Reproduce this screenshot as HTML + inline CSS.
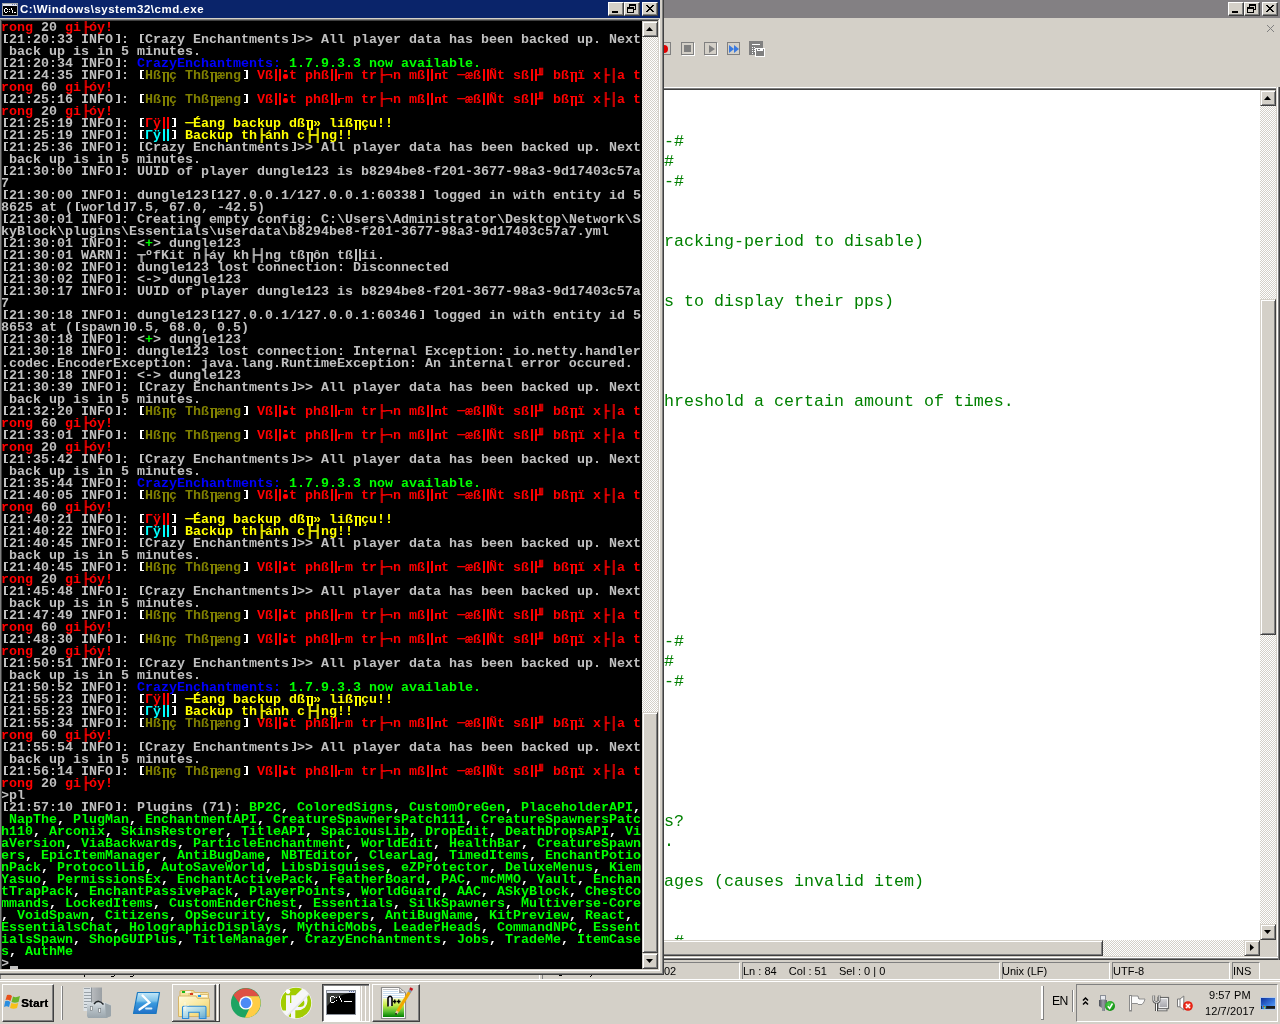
<!DOCTYPE html><html><head><meta charset="utf-8"><style>
*{margin:0;padding:0;box-sizing:border-box}
html,body{width:1280px;height:1024px;overflow:hidden;background:#d4d0c8;position:relative}
body>div,.a{position:absolute}
.con{position:absolute;left:2px;top:21px;width:640px;height:948px;background:#000;overflow:hidden;will-change:transform}
.con pre{position:absolute;left:-1px;font-family:"Liberation Mono",monospace;font-weight:bold;font-size:13.3333px;line-height:12px;height:12px;white-space:pre;color:#c0c0c0}
.con b{font-weight:bold;text-shadow:1px 0 0}
.bk{display:inline-block;width:8px;height:12px;vertical-align:top;position:relative}
.bk::before{content:'';position:absolute;top:0;width:4px;height:9px;box-sizing:border-box;border-top:1px solid;border-bottom:1px solid}
.bk::after{content:'';position:absolute;top:0;width:2px;height:9px;background:currentColor}
.bl::before{left:3px}.bl::after{left:3px}
.br::before{left:3px}.br::after{left:5px}
.dv{display:inline-block;width:8px;height:12px;vertical-align:top;position:relative}
.g1::before{left:2px!important;top:3px!important;height:9px!important}
.g1::after{content:'';position:absolute;left:1px;top:2px;width:7px;height:1px;background:currentColor}
.g2::before{left:2px!important;top:3px!important;height:6px!important}
.g2::after{content:'';position:absolute;left:2px;top:3px;width:6px;height:1px;background:currentColor}
.g3::before{left:3px!important;top:0!important;height:2px!important;width:3px!important;box-shadow:none!important}
.g3::after{content:'';position:absolute;left:2px;top:4px;width:5px;height:5px;border-radius:2px;background:currentColor}
.g4::before{left:1px!important;top:4px!important;height:5px!important;box-shadow:none!important}
.g4::after{content:'';position:absolute;left:1px;top:4px;width:6px;height:1px;background:currentColor}
.dv::before{content:'';position:absolute;left:2px;top:-1px;width:2px;height:12px;background:currentColor;box-shadow:4px 0 0 currentColor}
.ed{position:absolute;font-family:"Liberation Mono",monospace;font-size:16.6667px;line-height:20px;color:#008000;white-space:pre;will-change:transform}
.ui{font-family:"Liberation Sans",sans-serif;font-size:11px;color:#000;white-space:pre;will-change:transform}
</style></head><body>

<div style="left:664px;top:0px;width:616px;height:18px;background:#838083;"></div>
<div style="left:1228px;top:2px;width:16px;height:14px;background:#d4d0c8;border-top:1px solid #fff;border-left:1px solid #fff;border-right:1px solid #404040;border-bottom:1px solid #404040;box-shadow:inset -1px -1px 0 #808080"></div>
<div style="left:1244px;top:2px;width:16px;height:14px;background:#d4d0c8;border-top:1px solid #fff;border-left:1px solid #fff;border-right:1px solid #404040;border-bottom:1px solid #404040;box-shadow:inset -1px -1px 0 #808080"></div>
<div style="left:1262px;top:2px;width:16px;height:14px;background:#d4d0c8;border-top:1px solid #fff;border-left:1px solid #fff;border-right:1px solid #404040;border-bottom:1px solid #404040;box-shadow:inset -1px -1px 0 #808080"></div>
<div class="a" style="left:1232px;top:11px;width:6px;height:2px;background:#000"></div>
<div class="a" style="left:1249px;top:4px;width:7px;height:6px;border:1px solid #000;border-top-width:2px"></div>
<div class="a" style="left:1247px;top:7px;width:7px;height:6px;border:1px solid #000;border-top-width:2px;background:#d4d0c8"></div>
<svg class="a" style="left:1262px;top:2px" width="16" height="14"><path d="M4 3 L11 10 M5 3 L12 10 M11 3 L4 10 M12 3 L5 10" stroke="#000" stroke-width="1" shape-rendering="crispEdges"/></svg>
<div style="left:664px;top:18px;width:616px;height:69px;background:#d4d0c8;"></div>
<svg class="a" style="left:1266px;top:24px" width="10" height="10"><path d="M1 1 L8 8 M8 1 L1 8" stroke="#808080" stroke-width="1"/></svg>
<div class="a" style="left:664px;top:42px;width:7px;height:13px;border:1px solid #808080;border-left:none;background:#d4d0c8"></div>
<div class="a" style="left:664px;top:45px;width:4px;height:8px;border-radius:0 4px 4px 0;background:#e00000"></div>
<div class="a" style="left:681px;top:42px;width:13px;height:13px;border:1px solid #808080;box-shadow:1px 1px 0 #fff"></div>
<div class="a" style="left:684px;top:45px;width:7px;height:7px;background:#808080"></div>
<div class="a" style="left:704px;top:42px;width:13px;height:13px;border:1px solid #808080;box-shadow:1px 1px 0 #fff"></div>
<svg class="a" style="left:704px;top:42px" width="14" height="14"><path d="M5 3 L11 7 L5 11 Z" fill="#808080"/></svg>
<div class="a" style="left:727px;top:42px;width:13px;height:13px;border:1px solid #808080"></div>
<svg class="a" style="left:727px;top:42px" width="14" height="14"><path d="M2 3 L7 7 L2 11 Z M7 3 L12 7 L7 11 Z" fill="#3a7ae0"/></svg>
<svg class="a" style="left:748px;top:40px" width="20" height="18" shape-rendering="crispEdges"><rect x="1" y="1" width="14" height="14" fill="#808080"/><rect x="4" y="4" width="8" height="1" fill="#fff"/><rect x="4" y="7" width="1" height="1" fill="#fff"/><rect x="4" y="9" width="1" height="1" fill="#fff"/><rect x="4" y="11" width="1" height="1" fill="#fff"/><rect x="4" y="13" width="1" height="1" fill="#fff"/><rect x="6" y="7" width="1" height="1" fill="#fff"/><rect x="6" y="9" width="1" height="1" fill="#fff"/><rect x="6" y="11" width="1" height="1" fill="#fff"/><rect x="7" y="8" width="10" height="9" fill="#fff"/><rect x="8" y="9" width="8" height="7" fill="#808080"/><rect x="9" y="9" width="1" height="2" fill="#fff"/><rect x="9" y="10" width="6" height="1" fill="#fff"/><rect x="12" y="9" width="3" height="1" fill="#fff"/></svg>
<div style="left:664px;top:87px;width:616px;height:1px;background:#ffffff;"></div>
<div style="left:664px;top:88px;width:614px;height:1px;background:#808080;"></div>
<div style="left:664px;top:89px;width:614px;height:1px;background:#404040;"></div>
<div style="left:1276px;top:87px;width:1px;height:873px;background:#d4d0c8;"></div>
<div style="left:1277px;top:87px;width:1px;height:873px;background:#ffffff;"></div>
<div style="left:1278px;top:87px;width:1px;height:873px;background:#808080;"></div>
<div style="left:1279px;top:87px;width:1px;height:873px;background:#404040;"></div>
<div style="left:664px;top:90px;width:596px;height:850px;background:#ffffff;"></div>
<div class="ed" style="left:664px;top:132px">-#</div>
<div class="ed" style="left:664px;top:152px">#</div>
<div class="ed" style="left:664px;top:172px">-#</div>
<div class="ed" style="left:664px;top:232px">racking-period to disable)</div>
<div class="ed" style="left:664px;top:292px">s to display their pps)</div>
<div class="ed" style="left:664px;top:392px">hreshold a certain amount of times.</div>
<div class="ed" style="left:664px;top:632px">-#</div>
<div class="ed" style="left:664px;top:652px">#</div>
<div class="ed" style="left:664px;top:672px">-#</div>
<div class="ed" style="left:664px;top:812px">s?</div>
<div class="ed" style="left:664px;top:832px">.</div>
<div class="ed" style="left:664px;top:872px">ages (causes invalid item)</div>
<div class="ed" style="left:664px;top:932px"> #</div>
<div class="a" style="left:1260px;top:90px;width:16px;height:850px;background-color:#fff;background-image:linear-gradient(45deg,#d4d0c8 25%,transparent 25%,transparent 75%,#d4d0c8 75%),linear-gradient(45deg,#d4d0c8 25%,transparent 25%,transparent 75%,#d4d0c8 75%);background-size:2px 2px;background-position:0 0,1px 1px;"></div>
<div style="left:1260px;top:90px;width:16px;height:16px;background:#d4d0c8;border-top:1px solid #d4d0c8;border-left:1px solid #d4d0c8;border-right:1px solid #404040;border-bottom:1px solid #404040;box-shadow:inset 1px 1px 0 #fff, inset -1px -1px 0 #808080"></div>
<svg class="a" style="left:1260px;top:90px" width="16" height="16"><path d="M4 10 H11 L7.5 6 Z" fill="#000"/></svg>
<div style="left:1260px;top:299px;width:16px;height:336px;background:#d4d0c8;border-top:1px solid #d4d0c8;border-left:1px solid #d4d0c8;border-right:1px solid #404040;border-bottom:1px solid #404040;box-shadow:inset 1px 1px 0 #fff, inset -1px -1px 0 #808080"></div>
<div style="left:1260px;top:924px;width:16px;height:16px;background:#d4d0c8;border-top:1px solid #d4d0c8;border-left:1px solid #d4d0c8;border-right:1px solid #404040;border-bottom:1px solid #404040;box-shadow:inset 1px 1px 0 #fff, inset -1px -1px 0 #808080"></div>
<svg class="a" style="left:1260px;top:924px" width="16" height="16"><path d="M4 6 H11 L7.5 10 Z" fill="#000"/></svg>
<div class="a" style="left:664px;top:940px;width:596px;height:16px;background-color:#fff;background-image:linear-gradient(45deg,#d4d0c8 25%,transparent 25%,transparent 75%,#d4d0c8 75%),linear-gradient(45deg,#d4d0c8 25%,transparent 25%,transparent 75%,#d4d0c8 75%);background-size:2px 2px;background-position:0 0,1px 1px;"></div>
<div style="left:640px;top:940px;width:463px;height:16px;background:#d4d0c8;border-top:1px solid #d4d0c8;border-left:1px solid #d4d0c8;border-right:1px solid #404040;border-bottom:1px solid #404040;box-shadow:inset 1px 1px 0 #fff, inset -1px -1px 0 #808080"></div>
<div style="left:1244px;top:940px;width:16px;height:16px;background:#d4d0c8;border-top:1px solid #d4d0c8;border-left:1px solid #d4d0c8;border-right:1px solid #404040;border-bottom:1px solid #404040;box-shadow:inset 1px 1px 0 #fff, inset -1px -1px 0 #808080"></div>
<svg class="a" style="left:1244px;top:940px" width="16" height="16"><path d="M6 4 V11 L10 7.5 Z" fill="#000"/></svg>
<div style="left:1260px;top:940px;width:16px;height:16px;background:#d4d0c8;"></div>
<div style="left:664px;top:956px;width:614px;height:1px;background:#d4d0c8;"></div>
<div style="left:664px;top:957px;width:614px;height:1px;background:#ffffff;"></div>
<div style="left:664px;top:958px;width:614px;height:1px;background:#808080;"></div>
<div style="left:664px;top:959px;width:614px;height:1px;background:#404040;"></div>
<div style="left:664px;top:960px;width:616px;height:20px;background:#d4d0c8;"></div>
<div class="a" style="left:0px;top:962px;width:540px;height:18px;border-top:1px solid #808080;border-left:1px solid #808080;border-bottom:1px solid #fff;border-right:1px solid #fff"></div>
<div class="a" style="left:542px;top:962px;width:198px;height:18px;border-top:1px solid #808080;border-left:1px solid #808080;border-bottom:1px solid #fff;border-right:1px solid #fff"></div>
<div style="left:84px;top:975px;width:1px;height:2px;background:#000;"></div>
<div style="left:111px;top:976px;width:3px;height:1px;background:#000;"></div>
<div style="left:114px;top:975px;width:1px;height:1px;background:#000;"></div>
<div style="left:130px;top:976px;width:3px;height:1px;background:#000;"></div>
<div style="left:133px;top:975px;width:1px;height:1px;background:#000;"></div>
<div style="left:559px;top:975px;width:3px;height:1px;background:#000;"></div>
<div style="left:562px;top:974px;width:1px;height:1px;background:#000;"></div>
<div style="left:590px;top:976px;width:1px;height:1px;background:#000;"></div>
<div style="left:591px;top:975px;width:1px;height:1px;background:#000;"></div>
<div class="a" style="left:742px;top:962px;width:258px;height:18px;border-top:1px solid #808080;border-left:1px solid #808080;border-bottom:1px solid #fff;border-right:1px solid #fff"></div>
<div class="a" style="left:1002px;top:962px;width:108px;height:18px;border-top:1px solid #808080;border-left:1px solid #808080;border-bottom:1px solid #fff;border-right:1px solid #fff"></div>
<div class="a" style="left:1112px;top:962px;width:118px;height:18px;border-top:1px solid #808080;border-left:1px solid #808080;border-bottom:1px solid #fff;border-right:1px solid #fff"></div>
<div class="a" style="left:1232px;top:962px;width:28px;height:18px;border-top:1px solid #808080;border-left:1px solid #808080;border-bottom:1px solid #fff;border-right:1px solid #fff"></div>
<div class="a ui" style="left:664px;top:965px">02</div>
<div class="a ui" style="left:743px;top:965px">Ln : 84    Col : 51    Sel : 0 | 0</div>
<div class="a ui" style="left:1002px;top:965px">Unix (LF)</div>
<div class="a ui" style="left:1113px;top:965px">UTF-8</div>
<div class="a ui" style="left:1233px;top:965px">INS</div>
<div style="left:0px;top:979px;width:1280px;height:1px;background:#ffffff;"></div>
<div style="left:0px;top:0px;width:660px;height:18px;background:#0a246a;"></div>
<svg class="a" style="left:0;top:0" width="20" height="18" shape-rendering="crispEdges"><rect x="2" y="3" width="16" height="13" fill="#a3a6a8"/><rect x="3" y="4" width="14" height="2" fill="#dfe2ee"/><rect x="12" y="4" width="1" height="1" fill="#6b7aa8"/><rect x="14" y="4" width="1" height="1" fill="#6b7aa8"/><rect x="16" y="4" width="1" height="1" fill="#6b7aa8"/><rect x="3" y="6" width="14" height="9" fill="#000"/><g fill="#fff"><rect x="5" y="8" width="2" height="1"/><rect x="4" y="9" width="1" height="3"/><rect x="5" y="12" width="2" height="1"/><rect x="7" y="9" width="1" height="1"/><rect x="7" y="11" width="1" height="1"/><rect x="9" y="9" width="1" height="1"/><rect x="9" y="11" width="1" height="1"/><rect x="11" y="8" width="1" height="2"/><rect x="12" y="10" width="1" height="3"/><rect x="14" y="12" width="2" height="1"/></g></svg>
<div class="a ui" style="left:20px;top:2px;font-weight:bold;color:#fff;font-size:11.5px;letter-spacing:0.5px;line-height:14px">C:\Windows\system32\cmd.exe</div>
<div style="left:608px;top:2px;width:16px;height:14px;background:#d4d0c8;border-top:1px solid #fff;border-left:1px solid #fff;border-right:1px solid #404040;border-bottom:1px solid #404040;box-shadow:inset -1px -1px 0 #808080"></div>
<div style="left:624px;top:2px;width:16px;height:14px;background:#d4d0c8;border-top:1px solid #fff;border-left:1px solid #fff;border-right:1px solid #404040;border-bottom:1px solid #404040;box-shadow:inset -1px -1px 0 #808080"></div>
<div style="left:642px;top:2px;width:16px;height:14px;background:#d4d0c8;border-top:1px solid #fff;border-left:1px solid #fff;border-right:1px solid #404040;border-bottom:1px solid #404040;box-shadow:inset -1px -1px 0 #808080"></div>
<div class="a" style="left:612px;top:11px;width:6px;height:2px;background:#000"></div>
<div class="a" style="left:629px;top:4px;width:7px;height:6px;border:1px solid #000;border-top-width:2px"></div>
<div class="a" style="left:627px;top:7px;width:7px;height:6px;border:1px solid #000;border-top-width:2px;background:#d4d0c8"></div>
<svg class="a" style="left:642px;top:2px" width="16" height="14"><path d="M4 3 L11 10 M5 3 L12 10 M11 3 L4 10 M12 3 L5 10" stroke="#000" stroke-width="1" shape-rendering="crispEdges"/></svg>
<div style="left:0px;top:18px;width:664px;height:1px;background:#d4d0c8;"></div>
<div style="left:0px;top:19px;width:664px;height:1px;background:#808080;"></div>
<div style="left:0px;top:20px;width:658px;height:1px;background:#404040;"></div>
<div style="left:0px;top:19px;width:1px;height:950px;background:#808080;"></div>
<div style="left:1px;top:20px;width:1px;height:949px;background:#404040;"></div>
<div style="left:658px;top:20px;width:1px;height:949px;background:#d4d0c8;"></div>
<div style="left:659px;top:19px;width:1px;height:951px;background:#ffffff;"></div>
<div style="left:660px;top:0px;width:2px;height:973px;background:#d4d0c8;"></div>
<div style="left:662px;top:0px;width:1px;height:974px;background:#808080;"></div>
<div style="left:663px;top:0px;width:1px;height:975px;background:#404040;"></div>
<div style="left:0px;top:969px;width:659px;height:1px;background:#d4d0c8;"></div>
<div style="left:0px;top:970px;width:660px;height:1px;background:#ffffff;"></div>
<div style="left:0px;top:971px;width:662px;height:2px;background:#d4d0c8;"></div>
<div style="left:0px;top:973px;width:663px;height:1px;background:#808080;"></div>
<div style="left:0px;top:974px;width:664px;height:1px;background:#404040;"></div>
<div class="a" style="left:642px;top:21px;width:16px;height:948px;background-color:#fff;background-image:linear-gradient(45deg,#d4d0c8 25%,transparent 25%,transparent 75%,#d4d0c8 75%),linear-gradient(45deg,#d4d0c8 25%,transparent 25%,transparent 75%,#d4d0c8 75%);background-size:2px 2px;background-position:0 0,1px 1px;"></div>
<div style="left:642px;top:21px;width:16px;height:16px;background:#d4d0c8;border-top:1px solid #d4d0c8;border-left:1px solid #d4d0c8;border-right:1px solid #404040;border-bottom:1px solid #404040;box-shadow:inset 1px 1px 0 #fff, inset -1px -1px 0 #808080"></div>
<svg class="a" style="left:642px;top:21px" width="16" height="16"><path d="M4 10 H11 L7.5 6 Z" fill="#000"/></svg>
<div style="left:642px;top:712px;width:16px;height:241px;background:#d4d0c8;border-top:1px solid #d4d0c8;border-left:1px solid #d4d0c8;border-right:1px solid #404040;border-bottom:1px solid #404040;box-shadow:inset 1px 1px 0 #fff, inset -1px -1px 0 #808080"></div>
<div style="left:642px;top:953px;width:16px;height:16px;background:#d4d0c8;border-top:1px solid #d4d0c8;border-left:1px solid #d4d0c8;border-right:1px solid #404040;border-bottom:1px solid #404040;box-shadow:inset 1px 1px 0 #fff, inset -1px -1px 0 #808080"></div>
<svg class="a" style="left:642px;top:953px" width="16" height="16"><path d="M4 6 H11 L7.5 10 Z" fill="#000"/></svg>
<div class="con">
<pre style="top:1px"><span style="color:#ff0000">rong </span>20 <span style="color:#ff0000">gi<b>├</b>óy!</span></pre>
<pre style="top:13px"><i class="bk bl"></i>21:20:33 INFO<i class="bk br"></i>: <i class="bk bl"></i>Crazy Enchantments<i class="bk br"></i>&gt;&gt; All player data has been backed up. Next</pre>
<pre style="top:25px"> back up is in 5 minutes.</pre>
<pre style="top:37px"><i class="bk bl"></i>21:20:34 INFO<i class="bk br"></i>: <span style="color:#0000ff">CrazyEnchantments: </span><span style="color:#00ff00">1.7.9.3.3 now available.</span></pre>
<pre style="top:49px"><i class="bk bl"></i>21:24:35 INFO<i class="bk br"></i>: <span style="color:#ffffff"><i class="bk bl"></i></span><span style="color:#808000">Hß<i class="dv g1"></i>ç Thß<i class="dv g1"></i>æng</span><span style="color:#ffffff"><i class="bk br"></i></span><span style="color:#ff0000"> Vß<i class="dv"></i><i class="dv g3"></i>t phß<i class="dv"></i><i class="dv g4"></i>m tr<b>├</b>¬n mß<i class="dv"></i><i class="dv g2"></i>t <b>─</b>æß<i class="dv"></i>Ñt sß<i class="dv"></i><b>╜</b> bß<i class="dv g1"></i>ï x<b>├</b><b>│</b>a t</span></pre>
<pre style="top:61px"><span style="color:#ff0000">rong </span>60 <span style="color:#ff0000">gi<b>├</b>óy!</span></pre>
<pre style="top:73px"><i class="bk bl"></i>21:25:16 INFO<i class="bk br"></i>: <span style="color:#ffffff"><i class="bk bl"></i></span><span style="color:#808000">Hß<i class="dv g1"></i>ç Thß<i class="dv g1"></i>æng</span><span style="color:#ffffff"><i class="bk br"></i></span><span style="color:#ff0000"> Vß<i class="dv"></i><i class="dv g3"></i>t phß<i class="dv"></i><i class="dv g4"></i>m tr<b>├</b>¬n mß<i class="dv"></i><i class="dv g2"></i>t <b>─</b>æß<i class="dv"></i>Ñt sß<i class="dv"></i><b>╜</b> bß<i class="dv g1"></i>ï x<b>├</b><b>│</b>a t</span></pre>
<pre style="top:85px"><span style="color:#ff0000">rong </span>20 <span style="color:#ff0000">gi<b>├</b>óy!</span></pre>
<pre style="top:97px"><i class="bk bl"></i>21:25:19 INFO<i class="bk br"></i>: <span style="color:#ffffff"><i class="bk bl"></i></span><span style="color:#ff0000">Γÿ<i class="dv"></i></span><span style="color:#ffffff"><i class="bk br"></i></span><span style="color:#ffff00"> <b>─</b>Éang backup dß<i class="dv g1"></i>» liß<i class="dv g1"></i>çu!!</span></pre>
<pre style="top:109px"><i class="bk bl"></i>21:25:19 INFO<i class="bk br"></i>: <span style="color:#ffffff"><i class="bk bl"></i></span><span style="color:#00ffff">Γÿ<i class="dv"></i></span><span style="color:#ffffff"><i class="bk br"></i></span><span style="color:#ffff00"> Backup th<b>├</b>ánh c<b>├</b><b>┤</b>ng!!</span></pre>
<pre style="top:121px"><i class="bk bl"></i>21:25:36 INFO<i class="bk br"></i>: <i class="bk bl"></i>Crazy Enchantments<i class="bk br"></i>&gt;&gt; All player data has been backed up. Next</pre>
<pre style="top:133px"> back up is in 5 minutes.</pre>
<pre style="top:145px"><i class="bk bl"></i>21:30:00 INFO<i class="bk br"></i>: UUID of player dungle123 is b8294be8-f201-3677-98a3-9d17403c57a</pre>
<pre style="top:157px">7</pre>
<pre style="top:169px"><i class="bk bl"></i>21:30:00 INFO<i class="bk br"></i>: dungle123<i class="bk bl"></i>127.0.0.1/127.0.0.1:60338<i class="bk br"></i> logged in with entity id 5</pre>
<pre style="top:181px">8625 at (<i class="bk bl"></i>world<i class="bk br"></i>7.5, 67.0, -42.5)</pre>
<pre style="top:193px"><i class="bk bl"></i>21:30:01 INFO<i class="bk br"></i>: Creating empty config: C:\Users\Administrator\Desktop\Network\S</pre>
<pre style="top:205px">kyBlock\plugins\Essentials\userdata\b8294be8-f201-3677-98a3-9d17403c57a7.yml</pre>
<pre style="top:217px"><i class="bk bl"></i>21:30:01 INFO<i class="bk br"></i>: &lt;<span style="color:#00ff00">+</span>&gt; dungle123</pre>
<pre style="top:229px"><i class="bk bl"></i>21:30:01 WARN<i class="bk br"></i>: <b>┬</b>ºfKit n<b>├</b>áy kh<b>├</b><b>┤</b>ng tß<i class="dv g1"></i>ôn tß<i class="dv"></i>íi.</pre>
<pre style="top:241px"><i class="bk bl"></i>21:30:02 INFO<i class="bk br"></i>: dungle123 lost connection: Disconnected</pre>
<pre style="top:253px"><i class="bk bl"></i>21:30:02 INFO<i class="bk br"></i>: &lt;-&gt; dungle123</pre>
<pre style="top:265px"><i class="bk bl"></i>21:30:17 INFO<i class="bk br"></i>: UUID of player dungle123 is b8294be8-f201-3677-98a3-9d17403c57a</pre>
<pre style="top:277px">7</pre>
<pre style="top:289px"><i class="bk bl"></i>21:30:18 INFO<i class="bk br"></i>: dungle123<i class="bk bl"></i>127.0.0.1/127.0.0.1:60346<i class="bk br"></i> logged in with entity id 5</pre>
<pre style="top:301px">8653 at (<i class="bk bl"></i>spawn<i class="bk br"></i>0.5, 68.0, 0.5)</pre>
<pre style="top:313px"><i class="bk bl"></i>21:30:18 INFO<i class="bk br"></i>: &lt;<span style="color:#00ff00">+</span>&gt; dungle123</pre>
<pre style="top:325px"><i class="bk bl"></i>21:30:18 INFO<i class="bk br"></i>: dungle123 lost connection: Internal Exception: io.netty.handler</pre>
<pre style="top:337px">.codec.EncoderException: java.lang.RuntimeException: An internal error occured.</pre>
<pre style="top:349px"><i class="bk bl"></i>21:30:18 INFO<i class="bk br"></i>: &lt;-&gt; dungle123</pre>
<pre style="top:361px"><i class="bk bl"></i>21:30:39 INFO<i class="bk br"></i>: <i class="bk bl"></i>Crazy Enchantments<i class="bk br"></i>&gt;&gt; All player data has been backed up. Next</pre>
<pre style="top:373px"> back up is in 5 minutes.</pre>
<pre style="top:385px"><i class="bk bl"></i>21:32:20 INFO<i class="bk br"></i>: <span style="color:#ffffff"><i class="bk bl"></i></span><span style="color:#808000">Hß<i class="dv g1"></i>ç Thß<i class="dv g1"></i>æng</span><span style="color:#ffffff"><i class="bk br"></i></span><span style="color:#ff0000"> Vß<i class="dv"></i><i class="dv g3"></i>t phß<i class="dv"></i><i class="dv g4"></i>m tr<b>├</b>¬n mß<i class="dv"></i><i class="dv g2"></i>t <b>─</b>æß<i class="dv"></i>Ñt sß<i class="dv"></i><b>╜</b> bß<i class="dv g1"></i>ï x<b>├</b><b>│</b>a t</span></pre>
<pre style="top:397px"><span style="color:#ff0000">rong </span>60 <span style="color:#ff0000">gi<b>├</b>óy!</span></pre>
<pre style="top:409px"><i class="bk bl"></i>21:33:01 INFO<i class="bk br"></i>: <span style="color:#ffffff"><i class="bk bl"></i></span><span style="color:#808000">Hß<i class="dv g1"></i>ç Thß<i class="dv g1"></i>æng</span><span style="color:#ffffff"><i class="bk br"></i></span><span style="color:#ff0000"> Vß<i class="dv"></i><i class="dv g3"></i>t phß<i class="dv"></i><i class="dv g4"></i>m tr<b>├</b>¬n mß<i class="dv"></i><i class="dv g2"></i>t <b>─</b>æß<i class="dv"></i>Ñt sß<i class="dv"></i><b>╜</b> bß<i class="dv g1"></i>ï x<b>├</b><b>│</b>a t</span></pre>
<pre style="top:421px"><span style="color:#ff0000">rong </span>20 <span style="color:#ff0000">gi<b>├</b>óy!</span></pre>
<pre style="top:433px"><i class="bk bl"></i>21:35:42 INFO<i class="bk br"></i>: <i class="bk bl"></i>Crazy Enchantments<i class="bk br"></i>&gt;&gt; All player data has been backed up. Next</pre>
<pre style="top:445px"> back up is in 5 minutes.</pre>
<pre style="top:457px"><i class="bk bl"></i>21:35:44 INFO<i class="bk br"></i>: <span style="color:#0000ff">CrazyEnchantments: </span><span style="color:#00ff00">1.7.9.3.3 now available.</span></pre>
<pre style="top:469px"><i class="bk bl"></i>21:40:05 INFO<i class="bk br"></i>: <span style="color:#ffffff"><i class="bk bl"></i></span><span style="color:#808000">Hß<i class="dv g1"></i>ç Thß<i class="dv g1"></i>æng</span><span style="color:#ffffff"><i class="bk br"></i></span><span style="color:#ff0000"> Vß<i class="dv"></i><i class="dv g3"></i>t phß<i class="dv"></i><i class="dv g4"></i>m tr<b>├</b>¬n mß<i class="dv"></i><i class="dv g2"></i>t <b>─</b>æß<i class="dv"></i>Ñt sß<i class="dv"></i><b>╜</b> bß<i class="dv g1"></i>ï x<b>├</b><b>│</b>a t</span></pre>
<pre style="top:481px"><span style="color:#ff0000">rong </span>60 <span style="color:#ff0000">gi<b>├</b>óy!</span></pre>
<pre style="top:493px"><i class="bk bl"></i>21:40:21 INFO<i class="bk br"></i>: <span style="color:#ffffff"><i class="bk bl"></i></span><span style="color:#ff0000">Γÿ<i class="dv"></i></span><span style="color:#ffffff"><i class="bk br"></i></span><span style="color:#ffff00"> <b>─</b>Éang backup dß<i class="dv g1"></i>» liß<i class="dv g1"></i>çu!!</span></pre>
<pre style="top:505px"><i class="bk bl"></i>21:40:22 INFO<i class="bk br"></i>: <span style="color:#ffffff"><i class="bk bl"></i></span><span style="color:#00ffff">Γÿ<i class="dv"></i></span><span style="color:#ffffff"><i class="bk br"></i></span><span style="color:#ffff00"> Backup th<b>├</b>ánh c<b>├</b><b>┤</b>ng!!</span></pre>
<pre style="top:517px"><i class="bk bl"></i>21:40:45 INFO<i class="bk br"></i>: <i class="bk bl"></i>Crazy Enchantments<i class="bk br"></i>&gt;&gt; All player data has been backed up. Next</pre>
<pre style="top:529px"> back up is in 5 minutes.</pre>
<pre style="top:541px"><i class="bk bl"></i>21:40:45 INFO<i class="bk br"></i>: <span style="color:#ffffff"><i class="bk bl"></i></span><span style="color:#808000">Hß<i class="dv g1"></i>ç Thß<i class="dv g1"></i>æng</span><span style="color:#ffffff"><i class="bk br"></i></span><span style="color:#ff0000"> Vß<i class="dv"></i><i class="dv g3"></i>t phß<i class="dv"></i><i class="dv g4"></i>m tr<b>├</b>¬n mß<i class="dv"></i><i class="dv g2"></i>t <b>─</b>æß<i class="dv"></i>Ñt sß<i class="dv"></i><b>╜</b> bß<i class="dv g1"></i>ï x<b>├</b><b>│</b>a t</span></pre>
<pre style="top:553px"><span style="color:#ff0000">rong </span>20 <span style="color:#ff0000">gi<b>├</b>óy!</span></pre>
<pre style="top:565px"><i class="bk bl"></i>21:45:48 INFO<i class="bk br"></i>: <i class="bk bl"></i>Crazy Enchantments<i class="bk br"></i>&gt;&gt; All player data has been backed up. Next</pre>
<pre style="top:577px"> back up is in 5 minutes.</pre>
<pre style="top:589px"><i class="bk bl"></i>21:47:49 INFO<i class="bk br"></i>: <span style="color:#ffffff"><i class="bk bl"></i></span><span style="color:#808000">Hß<i class="dv g1"></i>ç Thß<i class="dv g1"></i>æng</span><span style="color:#ffffff"><i class="bk br"></i></span><span style="color:#ff0000"> Vß<i class="dv"></i><i class="dv g3"></i>t phß<i class="dv"></i><i class="dv g4"></i>m tr<b>├</b>¬n mß<i class="dv"></i><i class="dv g2"></i>t <b>─</b>æß<i class="dv"></i>Ñt sß<i class="dv"></i><b>╜</b> bß<i class="dv g1"></i>ï x<b>├</b><b>│</b>a t</span></pre>
<pre style="top:601px"><span style="color:#ff0000">rong </span>60 <span style="color:#ff0000">gi<b>├</b>óy!</span></pre>
<pre style="top:613px"><i class="bk bl"></i>21:48:30 INFO<i class="bk br"></i>: <span style="color:#ffffff"><i class="bk bl"></i></span><span style="color:#808000">Hß<i class="dv g1"></i>ç Thß<i class="dv g1"></i>æng</span><span style="color:#ffffff"><i class="bk br"></i></span><span style="color:#ff0000"> Vß<i class="dv"></i><i class="dv g3"></i>t phß<i class="dv"></i><i class="dv g4"></i>m tr<b>├</b>¬n mß<i class="dv"></i><i class="dv g2"></i>t <b>─</b>æß<i class="dv"></i>Ñt sß<i class="dv"></i><b>╜</b> bß<i class="dv g1"></i>ï x<b>├</b><b>│</b>a t</span></pre>
<pre style="top:625px"><span style="color:#ff0000">rong </span>20 <span style="color:#ff0000">gi<b>├</b>óy!</span></pre>
<pre style="top:637px"><i class="bk bl"></i>21:50:51 INFO<i class="bk br"></i>: <i class="bk bl"></i>Crazy Enchantments<i class="bk br"></i>&gt;&gt; All player data has been backed up. Next</pre>
<pre style="top:649px"> back up is in 5 minutes.</pre>
<pre style="top:661px"><i class="bk bl"></i>21:50:52 INFO<i class="bk br"></i>: <span style="color:#0000ff">CrazyEnchantments: </span><span style="color:#00ff00">1.7.9.3.3 now available.</span></pre>
<pre style="top:673px"><i class="bk bl"></i>21:55:23 INFO<i class="bk br"></i>: <span style="color:#ffffff"><i class="bk bl"></i></span><span style="color:#ff0000">Γÿ<i class="dv"></i></span><span style="color:#ffffff"><i class="bk br"></i></span><span style="color:#ffff00"> <b>─</b>Éang backup dß<i class="dv g1"></i>» liß<i class="dv g1"></i>çu!!</span></pre>
<pre style="top:685px"><i class="bk bl"></i>21:55:23 INFO<i class="bk br"></i>: <span style="color:#ffffff"><i class="bk bl"></i></span><span style="color:#00ffff">Γÿ<i class="dv"></i></span><span style="color:#ffffff"><i class="bk br"></i></span><span style="color:#ffff00"> Backup th<b>├</b>ánh c<b>├</b><b>┤</b>ng!!</span></pre>
<pre style="top:697px"><i class="bk bl"></i>21:55:34 INFO<i class="bk br"></i>: <span style="color:#ffffff"><i class="bk bl"></i></span><span style="color:#808000">Hß<i class="dv g1"></i>ç Thß<i class="dv g1"></i>æng</span><span style="color:#ffffff"><i class="bk br"></i></span><span style="color:#ff0000"> Vß<i class="dv"></i><i class="dv g3"></i>t phß<i class="dv"></i><i class="dv g4"></i>m tr<b>├</b>¬n mß<i class="dv"></i><i class="dv g2"></i>t <b>─</b>æß<i class="dv"></i>Ñt sß<i class="dv"></i><b>╜</b> bß<i class="dv g1"></i>ï x<b>├</b><b>│</b>a t</span></pre>
<pre style="top:709px"><span style="color:#ff0000">rong </span>60 <span style="color:#ff0000">gi<b>├</b>óy!</span></pre>
<pre style="top:721px"><i class="bk bl"></i>21:55:54 INFO<i class="bk br"></i>: <i class="bk bl"></i>Crazy Enchantments<i class="bk br"></i>&gt;&gt; All player data has been backed up. Next</pre>
<pre style="top:733px"> back up is in 5 minutes.</pre>
<pre style="top:745px"><i class="bk bl"></i>21:56:14 INFO<i class="bk br"></i>: <span style="color:#ffffff"><i class="bk bl"></i></span><span style="color:#808000">Hß<i class="dv g1"></i>ç Thß<i class="dv g1"></i>æng</span><span style="color:#ffffff"><i class="bk br"></i></span><span style="color:#ff0000"> Vß<i class="dv"></i><i class="dv g3"></i>t phß<i class="dv"></i><i class="dv g4"></i>m tr<b>├</b>¬n mß<i class="dv"></i><i class="dv g2"></i>t <b>─</b>æß<i class="dv"></i>Ñt sß<i class="dv"></i><b>╜</b> bß<i class="dv g1"></i>ï x<b>├</b><b>│</b>a t</span></pre>
<pre style="top:757px"><span style="color:#ff0000">rong </span>20 <span style="color:#ff0000">gi<b>├</b>óy!</span></pre>
<pre style="top:769px">&gt;pl</pre>
<pre style="top:781px"><i class="bk bl"></i>21:57:10 INFO<i class="bk br"></i>: Plugins (71): <span style="color:#00ff00">BP2C</span><span style="color:#ffffff">, </span><span style="color:#00ff00">ColoredSigns</span><span style="color:#ffffff">, </span><span style="color:#00ff00">CustomOreGen</span><span style="color:#ffffff">, </span><span style="color:#00ff00">PlaceholderAPI</span><span style="color:#ffffff">,</span></pre>
<pre style="top:793px"><span style="color:#ffffff"> </span><span style="color:#00ff00">NapThe</span><span style="color:#ffffff">, </span><span style="color:#00ff00">PlugMan</span><span style="color:#ffffff">, </span><span style="color:#00ff00">EnchantmentAPI</span><span style="color:#ffffff">, </span><span style="color:#00ff00">CreatureSpawnersPatch111</span><span style="color:#ffffff">, </span><span style="color:#00ff00">CreatureSpawnersPatc</span></pre>
<pre style="top:805px"><span style="color:#00ff00">h110</span><span style="color:#ffffff">, </span><span style="color:#00ff00">Arconix</span><span style="color:#ffffff">, </span><span style="color:#00ff00">SkinsRestorer</span><span style="color:#ffffff">, </span><span style="color:#00ff00">TitleAPI</span><span style="color:#ffffff">, </span><span style="color:#00ff00">SpaciousLib</span><span style="color:#ffffff">, </span><span style="color:#00ff00">DropEdit</span><span style="color:#ffffff">, </span><span style="color:#00ff00">DeathDropsAPI</span><span style="color:#ffffff">, </span><span style="color:#00ff00">Vi</span></pre>
<pre style="top:817px"><span style="color:#00ff00">aVersion</span><span style="color:#ffffff">, </span><span style="color:#00ff00">ViaBackwards</span><span style="color:#ffffff">, </span><span style="color:#00ff00">ParticleEnchantment</span><span style="color:#ffffff">, </span><span style="color:#00ff00">WorldEdit</span><span style="color:#ffffff">, </span><span style="color:#00ff00">HealthBar</span><span style="color:#ffffff">, </span><span style="color:#00ff00">CreatureSpawn</span></pre>
<pre style="top:829px"><span style="color:#00ff00">ers</span><span style="color:#ffffff">, </span><span style="color:#00ff00">EpicItemManager</span><span style="color:#ffffff">, </span><span style="color:#00ff00">AntiBugDame</span><span style="color:#ffffff">, </span><span style="color:#00ff00">NBTEditor</span><span style="color:#ffffff">, </span><span style="color:#00ff00">ClearLag</span><span style="color:#ffffff">, </span><span style="color:#00ff00">TimedItems</span><span style="color:#ffffff">, </span><span style="color:#00ff00">EnchantPotio</span></pre>
<pre style="top:841px"><span style="color:#00ff00">nPack</span><span style="color:#ffffff">, </span><span style="color:#00ff00">ProtocolLib</span><span style="color:#ffffff">, </span><span style="color:#00ff00">AutoSaveWorld</span><span style="color:#ffffff">, </span><span style="color:#00ff00">LibsDisguises</span><span style="color:#ffffff">, </span><span style="color:#00ff00">eZProtector</span><span style="color:#ffffff">, </span><span style="color:#00ff00">DeluxeMenus</span><span style="color:#ffffff">, </span><span style="color:#00ff00">Kiem</span></pre>
<pre style="top:853px"><span style="color:#00ff00">Yasuo</span><span style="color:#ffffff">, </span><span style="color:#00ff00">PermissionsEx</span><span style="color:#ffffff">, </span><span style="color:#00ff00">EnchantActivePack</span><span style="color:#ffffff">, </span><span style="color:#00ff00">FeatherBoard</span><span style="color:#ffffff">, </span><span style="color:#00ff00">PAC</span><span style="color:#ffffff">, </span><span style="color:#00ff00">mcMMO</span><span style="color:#ffffff">, </span><span style="color:#00ff00">Vault</span><span style="color:#ffffff">, </span><span style="color:#00ff00">Enchan</span></pre>
<pre style="top:865px"><span style="color:#00ff00">tTrapPack</span><span style="color:#ffffff">, </span><span style="color:#00ff00">EnchantPassivePack</span><span style="color:#ffffff">, </span><span style="color:#00ff00">PlayerPoints</span><span style="color:#ffffff">, </span><span style="color:#00ff00">WorldGuard</span><span style="color:#ffffff">, </span><span style="color:#00ff00">AAC</span><span style="color:#ffffff">, </span><span style="color:#00ff00">ASkyBlock</span><span style="color:#ffffff">, </span><span style="color:#00ff00">ChestCo</span></pre>
<pre style="top:877px"><span style="color:#00ff00">mmands</span><span style="color:#ffffff">, </span><span style="color:#00ff00">LockedItems</span><span style="color:#ffffff">, </span><span style="color:#00ff00">CustomEnderChest</span><span style="color:#ffffff">, </span><span style="color:#00ff00">Essentials</span><span style="color:#ffffff">, </span><span style="color:#00ff00">SilkSpawners</span><span style="color:#ffffff">, </span><span style="color:#00ff00">Multiverse-Core</span></pre>
<pre style="top:889px"><span style="color:#ffffff">, </span><span style="color:#00ff00">VoidSpawn</span><span style="color:#ffffff">, </span><span style="color:#00ff00">Citizens</span><span style="color:#ffffff">, </span><span style="color:#00ff00">OpSecurity</span><span style="color:#ffffff">, </span><span style="color:#00ff00">Shopkeepers</span><span style="color:#ffffff">, </span><span style="color:#00ff00">AntiBugName</span><span style="color:#ffffff">, </span><span style="color:#00ff00">KitPreview</span><span style="color:#ffffff">, </span><span style="color:#00ff00">React</span><span style="color:#ffffff">, </span></pre>
<pre style="top:901px"><span style="color:#00ff00">EssentialsChat</span><span style="color:#ffffff">, </span><span style="color:#00ff00">HolographicDisplays</span><span style="color:#ffffff">, </span><span style="color:#00ff00">MythicMobs</span><span style="color:#ffffff">, </span><span style="color:#00ff00">LeaderHeads</span><span style="color:#ffffff">, </span><span style="color:#00ff00">CommandNPC</span><span style="color:#ffffff">, </span><span style="color:#00ff00">Essent</span></pre>
<pre style="top:913px"><span style="color:#00ff00">ialsSpawn</span><span style="color:#ffffff">, </span><span style="color:#00ff00">ShopGUIPlus</span><span style="color:#ffffff">, </span><span style="color:#00ff00">TitleManager</span><span style="color:#ffffff">, </span><span style="color:#00ff00">CrazyEnchantments</span><span style="color:#ffffff">, </span><span style="color:#00ff00">Jobs</span><span style="color:#ffffff">, </span><span style="color:#00ff00">TradeMe</span><span style="color:#ffffff">, </span><span style="color:#00ff00">ItemCase</span></pre>
<pre style="top:925px"><span style="color:#00ff00">s</span><span style="color:#ffffff">, </span><span style="color:#00ff00">AuthMe</span></pre>
<pre style="top:937px">&gt;</pre>
<div class="a" style="left:8px;top:945px;width:8px;height:3px;background:#c0c0c0"></div>
</div>
<div style="left:0px;top:980px;width:1280px;height:1px;background:#d4d0c8;"></div>
<div style="left:0px;top:981px;width:1280px;height:1px;background:#ffffff;"></div>
<div style="left:0px;top:982px;width:1280px;height:42px;background:#d4d0c8;"></div>
<div style="left:2px;top:984px;width:52px;height:38px;background:#d4d0c8;border-top:1px solid #fff;border-left:1px solid #fff;border-right:1px solid #404040;border-bottom:1px solid #404040;box-shadow:inset -1px -1px 0 #808080"></div>
<div class="a ui" style="left:21px;top:997px;font-weight:bold;font-size:11.5px;line-height:13px;letter-spacing:0.2px;text-shadow:0.4px 0 0 #000">Start</div>
<svg class="a" style="left:4px;top:994px" width="17" height="15"><path d="M3 1 Q6 0 8 2 L6.5 7 Q4 5 1.5 6 Z" fill="#e8501a"/><path d="M9 2.5 Q12 4 16 2 L14.5 8 Q11 9.5 7.5 8 Z" fill="#6ab42a"/><path d="M1.3 7 Q4 6 6.3 8 L5 13 Q2.5 11.5 0 13 Z" fill="#2a8ee0"/><path d="M7.3 9 Q11 10.5 14.3 9 L13 14 Q9.5 15.5 6 14 Z" fill="#f8c018"/></svg>
<div style="left:61px;top:986px;width:1px;height:34px;background:#ffffff;"></div>
<div style="left:62px;top:986px;width:1px;height:34px;background:#808080;"></div>
<svg class="a" style="left:80px;top:985px" width="34" height="36"><defs><linearGradient id="tw" x1="0" x2="1"><stop offset="0" stop-color="#b9bcbf"/><stop offset="1" stop-color="#9a9fa3"/></linearGradient><linearGradient id="tb" x1="0" y1="0" x2="0" y2="1"><stop offset="0" stop-color="#d6dde2"/><stop offset="0.5" stop-color="#b3bdc3"/><stop offset="1" stop-color="#9aa5ac"/></linearGradient></defs><rect x="11.5" y="2.5" width="10.5" height="17" fill="url(#tw)"/><rect x="3.5" y="2.5" width="8" height="23.5" fill="#dde3e8"/><path d="M4 3.5 H10 M4 7.5 H11 M4 10.5 H11 M4 13.5 H11 M4 16.5 H11 M4 19.5 H11 M4 22.5 H11" stroke="#9aa2a8" stroke-width="1"/><path d="M11.5 2.5 V19" stroke="#8a9196" stroke-width="1"/><path d="M7 18.5 L9 17.5 H25 L31 20 V31 L26 33 H8 L7 31 Z" fill="url(#tb)"/><path d="M25 18 L31 20.5 V31 L26 33 Z" fill="#9aa4aa"/><path d="M14 19 Q18.5 13.5 23.5 19.5" stroke="#1e2326" stroke-width="1.5" fill="none"/><rect x="10.5" y="21.5" width="2" height="4" fill="#f4f4f4" stroke="#6d757a" stroke-width="0.6"/><rect x="18.7" y="23.5" width="2" height="4" fill="#f4f4f4" stroke="#6d757a" stroke-width="0.6"/></svg>
<svg class="a" style="left:132px;top:991px" width="29" height="24"><defs><linearGradient id="ps" x1="0" y1="0" x2="0" y2="1"><stop offset="0" stop-color="#c4e8f8"/><stop offset="0.4" stop-color="#7cc2ea"/><stop offset="0.5" stop-color="#3a9ade"/><stop offset="1" stop-color="#2070c8"/></linearGradient></defs><path d="M5.5 1.5 H27.5 L24 22.5 H1.5 Z" fill="url(#ps)" stroke="#1a78c0" stroke-width="1.2" stroke-linejoin="round"/><path d="M10.5 4.5 L17.5 11.5 L7.5 18.5" stroke="#fff" stroke-width="2.2" fill="none" stroke-linecap="round"/><path d="M14 17.5 H19.5" stroke="#d8ecf8" stroke-width="1.8" stroke-linecap="round"/></svg>
<div style="left:172px;top:984px;width:44px;height:38px;background:#d4d0c8;border-top:1px solid #fff;border-left:1px solid #fff;border-right:1px solid #404040;border-bottom:1px solid #404040;box-shadow:inset -1px -1px 0 #808080"></div>
<div style="left:216px;top:984px;width:3px;height:1px;background:#ffffff;"></div>
<div style="left:217px;top:985px;width:1px;height:36px;background:#ffffff;"></div>
<div style="left:219px;top:984px;width:1px;height:38px;background:#404040;"></div>
<div style="left:172px;top:1021px;width:48px;height:1px;background:#404040;"></div>
<svg class="a" style="left:178px;top:989px" width="33" height="32"><defs><linearGradient id="fd" x1="0" y1="0" x2="1" y2="1"><stop offset="0" stop-color="#fffbe0"/><stop offset="0.5" stop-color="#fbe9a0"/><stop offset="1" stop-color="#f0cc60"/></linearGradient><linearGradient id="fb" x1="0" y1="0" x2="1" y2="1"><stop offset="0" stop-color="#e8f8ff"/><stop offset="0.5" stop-color="#9ed6f4"/><stop offset="1" stop-color="#4aa2e0"/></linearGradient></defs><path d="M2 5.5 V2.5 Q2 1.5 3 1.5 H15.5 L16.5 3.5 H29.5 Q30.5 3.5 30.5 4.5 V10 H2 Z" fill="#f6e3a0" stroke="#d6b468" stroke-width="1"/><path d="M11 5.5 V4 H18 L19 5.5 H30.5 V10 H11 Z" fill="#f8e8a8" stroke="#d6b468" stroke-width="0.8"/><rect x="4" y="2" width="3" height="2" fill="#18b818"/><path d="M7.5 3 H13" stroke="#fff" stroke-width="1.4"/><rect x="12" y="4" width="3" height="2" fill="#d83a20"/><path d="M15.5 5 H22" stroke="#fff" stroke-width="1.4"/><rect x="20" y="6" width="3" height="2" fill="#1a96f0"/><path d="M23.5 7 H29" stroke="#fff" stroke-width="1.4"/><path d="M0.5 8 Q0.5 7 1.5 7 H18 L19.5 9.3 H30.5 Q31.5 9.3 31.5 10.3 V27.5 H0.5 Z" fill="url(#fd)" stroke="#d6b468" stroke-width="1"/><path d="M4.5 29.5 V18.5 Q4.5 17.3 5.7 17.3 H26.8 Q28 17.3 28 18.5 V29.5 H21.3 V23.2 H10.7 V29.5 Z" fill="url(#fb)" fill-opacity="0.85" stroke="#2a8ad8" stroke-width="1.1"/><path d="M7 13 V22 M5 19 L11 16" stroke="#fff" stroke-width="0.7" opacity="0.8"/></svg>
<svg class="a" style="left:231px;top:988px" width="30" height="30"><circle cx="14.9" cy="14.9" r="14.9" fill="#1da462"/><path d="M14.9 15 L14.9 8.2 L28 8.2 A14.9 14.9 0 0 0 2.4 7 L8.2 15 Z" fill="#dd5144"/><path d="M14.9 15 L14.9 8.2 L28 8.2 A14.9 14.9 0 0 1 13.9 29.8 L18.3 20.7 Z" fill="#ffcd46"/><circle cx="14.9" cy="14.9" r="6.7" fill="#fff"/><circle cx="14.9" cy="14.9" r="5.3" fill="#4c8bf5"/></svg>
<svg class="a" style="left:278px;top:985px" width="36" height="36"><defs><clipPath id="jc"><circle cx="18" cy="18" r="15.2"/></clipPath></defs><circle cx="18" cy="18" r="15.9" fill="#f6f6f8"/><g clip-path="url(#jc)" fill="#a2cc02"><path d="M11 2 H26 L17.5 10.2 H7 V2 Z"/><rect x="2" y="8" width="6" height="17.5"/><rect x="12" y="10" width="1.3" height="8"/><path d="M17.3 34 V25.2 Q23.5 25.8 27 22.5 Q30.8 18.5 28.8 11 L30.5 9.5 L36 12 V34 Z"/><path d="M19.5 21.5 L25.8 15.3 Q27.6 19.6 24.5 21.6 Q22 22.6 19.5 21.5 Z"/><path d="M10 31.8 L13 27 V33 Z"/></g><circle cx="10" cy="6.6" r="2.3" fill="#fff"/><path d="M9.5 30.5 L30.5 9.5" stroke="#e6e6ea" stroke-width="1.6"/></svg>
<div class="a" style="left:322px;top:984px;width:48px;height:38px;border-top:1px solid #404040;border-left:1px solid #404040;border-bottom:1px solid #fff;border-right:1px solid #fff;box-shadow:inset 1px 1px 0 #808080;background:#d4d0c8"></div>
<div style="left:324px;top:986px;width:36px;height:35px;background:#ffffff;"></div>
<div style="left:361px;top:986px;width:1px;height:35px;background:#ffffff;"></div>
<div style="left:365px;top:986px;width:1px;height:35px;background:#ffffff;"></div>
<div style="left:369px;top:984px;width:1px;height:38px;background:#ffffff;"></div>
<svg class="a" style="left:0;top:0" width="1280" height="1024" shape-rendering="crispEdges"><rect x="326" y="990" width="30" height="25" fill="#8a909a"/><rect x="327" y="991" width="28" height="2" fill="#dfe3ee"/><rect x="349" y="991" width="1" height="1" fill="#5a6aa0"/><rect x="351" y="991" width="1" height="1" fill="#5a6aa0"/><rect x="353" y="991" width="1" height="1" fill="#5a6aa0"/><rect x="327" y="993" width="28" height="21" fill="#000"/><path d="M327 993 H350 Q336 995 327 1006 Z" fill="#3a3d3a" shape-rendering="auto"/><g fill="#fff"><rect x="331" y="996" width="3" height="1"/><rect x="330" y="997" width="1" height="5"/><rect x="331" y="1002" width="3" height="1"/><rect x="334" y="997" width="1" height="1"/><rect x="334" y="1001" width="1" height="1"/><rect x="336" y="997" width="1" height="1"/><rect x="336" y="1000" width="1" height="1"/><rect x="339" y="996" width="1" height="2"/><rect x="340" y="998" width="1" height="2"/><rect x="341" y="1000" width="1" height="2"/><rect x="344" y="1001" width="8" height="1"/></g></svg>
<div style="left:372px;top:984px;width:48px;height:38px;background:#d4d0c8;border-top:1px solid #fff;border-left:1px solid #fff;border-right:1px solid #404040;border-bottom:1px solid #404040;box-shadow:inset -1px -1px 0 #808080"></div>
<svg class="a" style="left:376px;top:984px" width="42" height="38"><defs><linearGradient id="np" x1="0" y1="0" x2="0" y2="1"><stop offset="0" stop-color="#f2fbb0"/><stop offset="0.35" stop-color="#c6ec48"/><stop offset="0.7" stop-color="#5cbf32"/><stop offset="1" stop-color="#008000"/></linearGradient></defs><path d="M5.5 3.5 H23 L29.5 9 V34.5 H5.5 Z" fill="#fff" stroke="#8c8c8c" stroke-width="1.2"/><path d="M23 3.5 V9 H29.5 Z" fill="#a0a0a0"/><path d="M24 5 Q25 8 28 8" stroke="#fff" stroke-width="1" fill="none"/><rect x="7" y="14.5" width="21" height="18.5" fill="url(#np)"/><path d="M7 7.5 H22 M7 9.5 H28 M7 11.5 H28 M7 13.5 H28" stroke="#c9def0" stroke-width="1"/><path d="M7.5 5.5 H22" stroke="#8a8a8a" stroke-width="1" stroke-dasharray="1 1"/><path d="M12 22.5 V14 Q13 12.3 14.1 12.3 Q15.2 12.3 16 14 V22" stroke="#000" stroke-width="1.6" fill="#e4e4ec"/><path d="M17 17.5 H20.5 M18.75 15.5 V19.5 M21 17.5 H24.5 M22.75 15.5 V19.5" stroke="#000" stroke-width="1.3"/><path d="M21.5 27.5 L33.5 8" stroke="#f0a800" stroke-width="3.2"/><path d="M33.3 8.3 L34.7 6" stroke="#8a96a8" stroke-width="3.2"/><path d="M34.6 6.1 L35.8 4" stroke="#c8101a" stroke-width="3.2"/><path d="M21.6 27.3 L20.2 29.6" stroke="#e8c8a0" stroke-width="2.6"/><path d="M20.4 29.2 L19.6 30.5" stroke="#222" stroke-width="1.6"/></svg>
<div style="left:1041px;top:986px;width:2px;height:34px;background:#ffffff;"></div>
<div style="left:1043px;top:986px;width:1px;height:34px;background:#808080;"></div>
<div style="left:1041px;top:1019px;width:3px;height:1px;background:#808080;"></div>
<div class="a ui" style="left:1052px;top:994px;font-size:12.2px;letter-spacing:-0.6px;line-height:14px">EN</div>
<div style="left:1072px;top:990px;width:1px;height:22px;background:#808080;"></div>
<div style="left:1073px;top:990px;width:1px;height:22px;background:#ffffff;"></div>
<div class="a" style="left:1076px;top:984px;width:202px;height:38px;border-top:1px solid #808080;border-left:1px solid #808080;border-bottom:1px solid #fff;border-right:1px solid #fff"></div>
<svg class="a" style="left:1082px;top:996px" width="8" height="10"><path d="M1 4.5 L3.5 2 L6 4.5 M1 8.5 L3.5 6 L6 8.5" stroke="#000" stroke-width="1.5" fill="none"/></svg>
<svg class="a" style="left:1097px;top:994px" width="20" height="18"><defs><linearGradient id="pl" x1="0" x2="1"><stop offset="0" stop-color="#4a4e56"/><stop offset="0.5" stop-color="#9a9ea6"/><stop offset="1" stop-color="#5a5e66"/></linearGradient><radialGradient id="ck" cx="0.4" cy="0.35" r="0.7"><stop offset="0" stop-color="#4ad04a"/><stop offset="1" stop-color="#0e8a0e"/></radialGradient></defs><rect x="3.5" y="1.5" width="5" height="4.5" fill="#e8eaf0" stroke="#8a8e96" stroke-width="1"/><path d="M2 6 H10 V12 L8 14 V17 H5 V14 L2 12 Z" fill="url(#pl)"/><circle cx="13" cy="12" r="5" fill="url(#ck)"/><path d="M10.8 12.3 L12.6 14.5 L15.5 9.5" stroke="#fff" stroke-width="1.5" fill="none"/></svg>
<svg class="a" style="left:1128px;top:994px" width="19" height="18"><rect x="1.5" y="1.5" width="2" height="15.5" fill="#fff" stroke="#8a8a8a" stroke-width="1"/><path d="M3.5 2 H10 L11 5 H17 L16 8 L14 10.5 H10 L9.5 9.5 H3.5 Z" fill="#fbfbfb" stroke="#8f8f8f" stroke-width="1" stroke-linejoin="round"/><path d="M10 2.5 L11 5" stroke="#8f8f8f" stroke-width="1"/></svg>
<svg class="a" style="left:1148px;top:990px" width="52" height="24"><defs><linearGradient id="scr" x1="0" y1="0" x2="0" y2="1"><stop offset="0" stop-color="#d0d0d4"/><stop offset="1" stop-color="#a8a8ae"/></linearGradient></defs><rect x="10" y="7.5" width="10.5" height="11" fill="#fff" stroke="#6a6a6a" stroke-width="1.2"/><rect x="11.5" y="9" width="7.5" height="8" fill="url(#scr)"/><rect x="9.5" y="18.8" width="9.5" height="2" fill="#fff" stroke="#6a6a6a" stroke-width="1"/><path d="M8.5 12 V21" stroke="#333" stroke-width="2.6"/><path d="M8.5 12 V21" stroke="#fff" stroke-width="1"/><path d="M5.8 5.5 V10.5 Q5.8 12.3 8.5 12.3 Q11.2 12.3 11.2 10.5 V5.5" stroke="#555" stroke-width="2.6" fill="none"/><path d="M5.8 5.5 V10.5 Q5.8 12.3 8.5 12.3 Q11.2 12.3 11.2 10.5 V5.5" stroke="#fff" stroke-width="1" fill="none"/><path d="M29.5 9 H32 L35.8 6 V20 L32 16.8 H29.5 Z" fill="#fff" stroke="#7a7a7a" stroke-width="1" stroke-linejoin="round"/><path d="M32 9 V16.8" stroke="#7a7a7a" stroke-width="1"/><circle cx="40" cy="16" r="4.8" fill="#e41a0c"/><circle cx="40" cy="16" r="3.4" fill="#f04030"/><path d="M38 14 L42 18 M42 14 L38 18" stroke="#fff" stroke-width="1.6"/></svg>
<div class="a ui" style="left:1209px;top:989px;font-size:11px;line-height:13px;letter-spacing:0.1px">9:57 PM</div>
<div class="a ui" style="left:1205px;top:1005px;font-size:11px;line-height:13px;letter-spacing:0.1px">12/7/2017</div>
<svg class="a" style="left:1260px;top:997px" width="16" height="13"><defs><linearGradient id="sd" x1="0" y1="0" x2="1" y2="1"><stop offset="0" stop-color="#0a2c98"/><stop offset="0.6" stop-color="#3a7ae0"/><stop offset="1" stop-color="#70b0f4"/></linearGradient></defs><rect x="0.5" y="0.5" width="15" height="12" fill="url(#sd)" stroke="#b8cce8"/><rect x="1" y="9" width="14" height="2.8" fill="#1c1c1a"/><circle cx="4" cy="10" r="2.3" fill="#2a8ae8"/><rect x="3" y="8.8" width="1.2" height="1.2" fill="#f03020"/><rect x="4.2" y="9.2" width="1.2" height="1.2" fill="#40c020"/><rect x="4" y="10.4" width="1.2" height="1.2" fill="#f8d020"/></svg>
</body></html>
